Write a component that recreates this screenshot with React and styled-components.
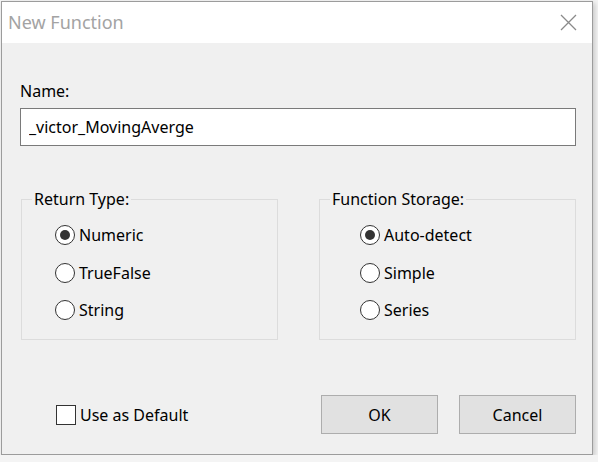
import React, { useState } from "react";
import styled, { createGlobalStyle } from "styled-components";

const GlobalStyle = createGlobalStyle`
  html, body {
    margin: 0;
    padding: 0;
    background: #f4f4f4;
  }
  body {
    font-family: "Noto Sans", "Open Sans", Arial, sans-serif;
    color: #000;
  }
`;

const Dialog = styled.div`
  width: 590px;
  height: 452px;
  margin: 1px 0 0 1px;
  border: 1px solid #9c9c9c;
  background: #f0f0f0;
  box-shadow: 2px 2px 5px rgba(0, 0, 0, 0.18);
  display: flex;
  flex-direction: column;
`;

const TitleBar = styled.div`
  height: 41px;
  background: #fff;
  display: flex;
  align-items: center;
  justify-content: space-between;
  padding: 0 15px 0 6px;
`;

const Title = styled.span`
  font-size: 18px;
  color: #a3a3a3;
  margin-top: -2px;
`;

const CloseButton = styled.button`
  border: none;
  background: none;
  padding: 0;
  width: 17px;
  height: 17px;
  display: flex;
  cursor: pointer;
`;

const Body = styled.div`
  flex: 1;
  display: flex;
  flex-direction: column;
  padding: 38px 16px 0 18px;
`;

const Label = styled.label`
  font-size: 16px;
  line-height: 20px;
  margin-bottom: 7px;
`;

const NameInput = styled.input`
  box-sizing: border-box;
  height: 38px;
  width: 556px;
  border: 1px solid #7a7a7a;
  background: #fff;
  padding: 0 8px;
  font-family: inherit;
  font-size: 16px;
  color: #000;
  outline: none;
`;

const Groups = styled.div`
  display: flex;
  gap: 41px;
  margin-top: 53px;
`;

const Group = styled.div`
  position: relative;
  box-sizing: border-box;
  width: 257px;
  height: 141px;
  margin-left: ${(p) => p.$offset || 0}px;
  border: 1px solid #dcdcdc;
  display: flex;
  flex-direction: column;
  gap: 17.5px;
  padding: 25px 0 0 ${(p) => p.$indent}px;
`;

const Legend = styled.span`
  position: absolute;
  top: -11px;
  left: ${(p) => p.$left}px;
  padding: 0 2px;
  background: #f0f0f0;
  font-size: 16px;
  line-height: 20px;
`;

const Option = styled.label`
  display: flex;
  align-items: center;
  gap: 4px;
  height: 20px;
  font-size: 16px;
  cursor: pointer;
`;

const RadioCircle = styled.span`
  box-sizing: border-box;
  width: 20px;
  height: 20px;
  border-radius: 50%;
  border: 1.5px solid #333;
  background: #fff;
  display: flex;
  align-items: center;
  justify-content: center;

  &::after {
    content: "";
    width: 10px;
    height: 10px;
    border-radius: 50%;
    background: ${(p) => (p.$checked ? "#333" : "transparent")};
  }
`;

const Footer = styled.div`
  display: flex;
  align-items: center;
  margin-top: 55px;
`;

const CheckLabel = styled.label`
  display: flex;
  align-items: center;
  gap: 4px;
  margin-left: 36px;
  font-size: 16px;
  cursor: pointer;
`;

const CheckBox = styled.span`
  box-sizing: border-box;
  width: 20px;
  height: 20px;
  border: 1.5px solid #333;
  background: #fff;
`;

const Buttons = styled.div`
  margin-left: auto;
  display: flex;
  gap: 21px;
`;

const Button = styled.button`
  box-sizing: border-box;
  width: 117px;
  height: 39px;
  background: #e1e1e1;
  border: 1px solid #adadad;
  font-family: inherit;
  font-size: 16px;
  color: #000;
  cursor: pointer;
`;

const RadioGroup = ({ legend, legendLeft, indent, offset, options, value, onChange }) => (
  <Group $indent={indent} $offset={offset}>
    <Legend $left={legendLeft}>{legend}</Legend>
    {options.map((opt) => (
      <Option key={opt} onClick={() => onChange(opt)}>
        <RadioCircle $checked={value === opt} />
        {opt}
      </Option>
    ))}
  </Group>
);

const App = () => {
  const [name, setName] = useState("_victor_MovingAverge");
  const [returnType, setReturnType] = useState("Numeric");
  const [storage, setStorage] = useState("Auto-detect");

  return (
    <>
      <GlobalStyle />
      <Dialog>
        <TitleBar>
          <Title>New Function</Title>
          <CloseButton aria-label="Close">
            <svg width="17" height="17" viewBox="0 0 17 17">
              <path d="M1 1 L16 16 M16 1 L1 16" stroke="#8a8a8a" strokeWidth="1.3" fill="none" />
            </svg>
          </CloseButton>
        </TitleBar>
        <Body>
          <Label htmlFor="fn-name">Name:</Label>
          <NameInput id="fn-name" value={name} onChange={(e) => setName(e.target.value)} />
          <Groups>
            <RadioGroup
              legend="Return Type:"
              legendLeft={10}
              indent={33}
              offset={1}
              options={["Numeric", "TrueFalse", "String"]}
              value={returnType}
              onChange={setReturnType}
            />
            <RadioGroup
              legend="Function Storage:"
              legendLeft={10}
              indent={40}
              options={["Auto-detect", "Simple", "Series"]}
              value={storage}
              onChange={setStorage}
            />
          </Groups>
          <Footer>
            <CheckLabel>
              <CheckBox />
              Use as Default
            </CheckLabel>
            <Buttons>
              <Button>OK</Button>
              <Button>Cancel</Button>
            </Buttons>
          </Footer>
        </Body>
      </Dialog>
    </>
  );
};

export default App;
